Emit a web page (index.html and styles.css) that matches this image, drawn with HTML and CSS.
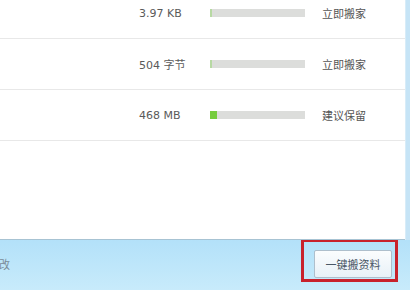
FILE: index.html
```html
<!DOCTYPE html>
<html lang="zh-CN">
<head>
  <meta charset="UTF-8">
  <meta name="viewport" content="width=device-width, initial-scale=1.0">
  <title>一键搬资料</title>
  <link rel="stylesheet" href="styles.css">
</head>
<body>

  <div class="window">
    <div class="main">
      <div class="panel">
        <ul class="file-list">
          <li class="file-row">
            <span class="size">3.97 KB</span>
            <span class="bar"><span class="fill" style="width: 2px"></span></span>
            <span class="action">立即搬家</span>
          </li>
          <li class="file-row">
            <span class="size">504 字节</span>
            <span class="bar"><span class="fill" style="width: 2px"></span></span>
            <span class="action">立即搬家</span>
          </li>
          <li class="file-row">
            <span class="size">468 MB</span>
            <span class="bar"><span class="fill big" style="width: 7px"></span></span>
            <span class="action">建议保留</span>
          </li>
        </ul>
      </div>
      <div class="side"></div>
    </div>

    <div class="footer">
      <span class="hint">改</span>
      <div class="highlight">
        <button class="move-btn">一键搬资料</button>
      </div>
    </div>
  </div>

</body>
</html>
```

FILE: styles.css
```css
/* page */
body {
  margin: 0;
  padding: 0;
  width: 410px;
  height: 290px;
  overflow: hidden;
  font-family: 'DejaVu Sans', 'Noto Sans CJK SC', sans-serif;
  background-color: #c2e6fa;
}

.window {
  display: flex;
  flex-direction: column;
  height: 290px;
}

.main {
  display: flex;
  height: 240px;
}

/* white list panel */
.panel {
  width: 405px;
  background-color: #fff;
  border-bottom: 1px solid #a7c3d3;
  overflow: hidden;
}

.side {
  flex: 1;
  background-color: #c6e4f6;
  border-left: 1px solid #d8ecf8;
}

.file-list {
  list-style: none;
  margin: -12px 0 0 0;
  padding: 0;
}

.file-row {
  display: grid;
  grid-template-columns: 71px 95px auto;
  column-gap: 0;
  align-items: center;
  height: 50px;
  padding-left: 139px;
  border-bottom: 1px solid #e8e8e8;
}

.size {
  font-size: 11px;
  color: #5a5a5a;
}

.bar {
  display: block;
  height: 8px;
  background-color: #dcdddb;
}

.fill {
  display: block;
  height: 8px;
  background-color: #b7d9a3;
}

.fill.big {
  background-color: #76cc3e;
}

.action {
  margin-left: 17px;
  font-family: 'Noto Sans CJK SC', sans-serif;
  font-size: 11px;
  color: #555;
}

/* bottom bar */
.footer {
  flex: 1;
  display: flex;
  align-items: flex-start;
  justify-content: space-between;
  background: linear-gradient(#b3e1f9, #c8ebfb);
}

.hint {
  margin-top: 16px;
  margin-left: -1px;
  font-family: 'Noto Sans CJK SC', sans-serif;
  font-size: 11px;
  color: #7a8a96;
}

.highlight {
  margin-right: 12px;
  padding: 8px 3px 0 10px;
  height: 29px;
  border: 3px solid #c8222c;
  border-top-width: 2px;
}

.move-btn {
  width: 78px;
  height: 28px;
  padding: 0;
  font-family: 'Noto Sans CJK SC', sans-serif;
  font-size: 11px;
  color: #4a5866;
  background: linear-gradient(#fbfdfe, #e8f1f7);
  border: 1px solid #aebfcc;
  border-radius: 2px;
}
```
